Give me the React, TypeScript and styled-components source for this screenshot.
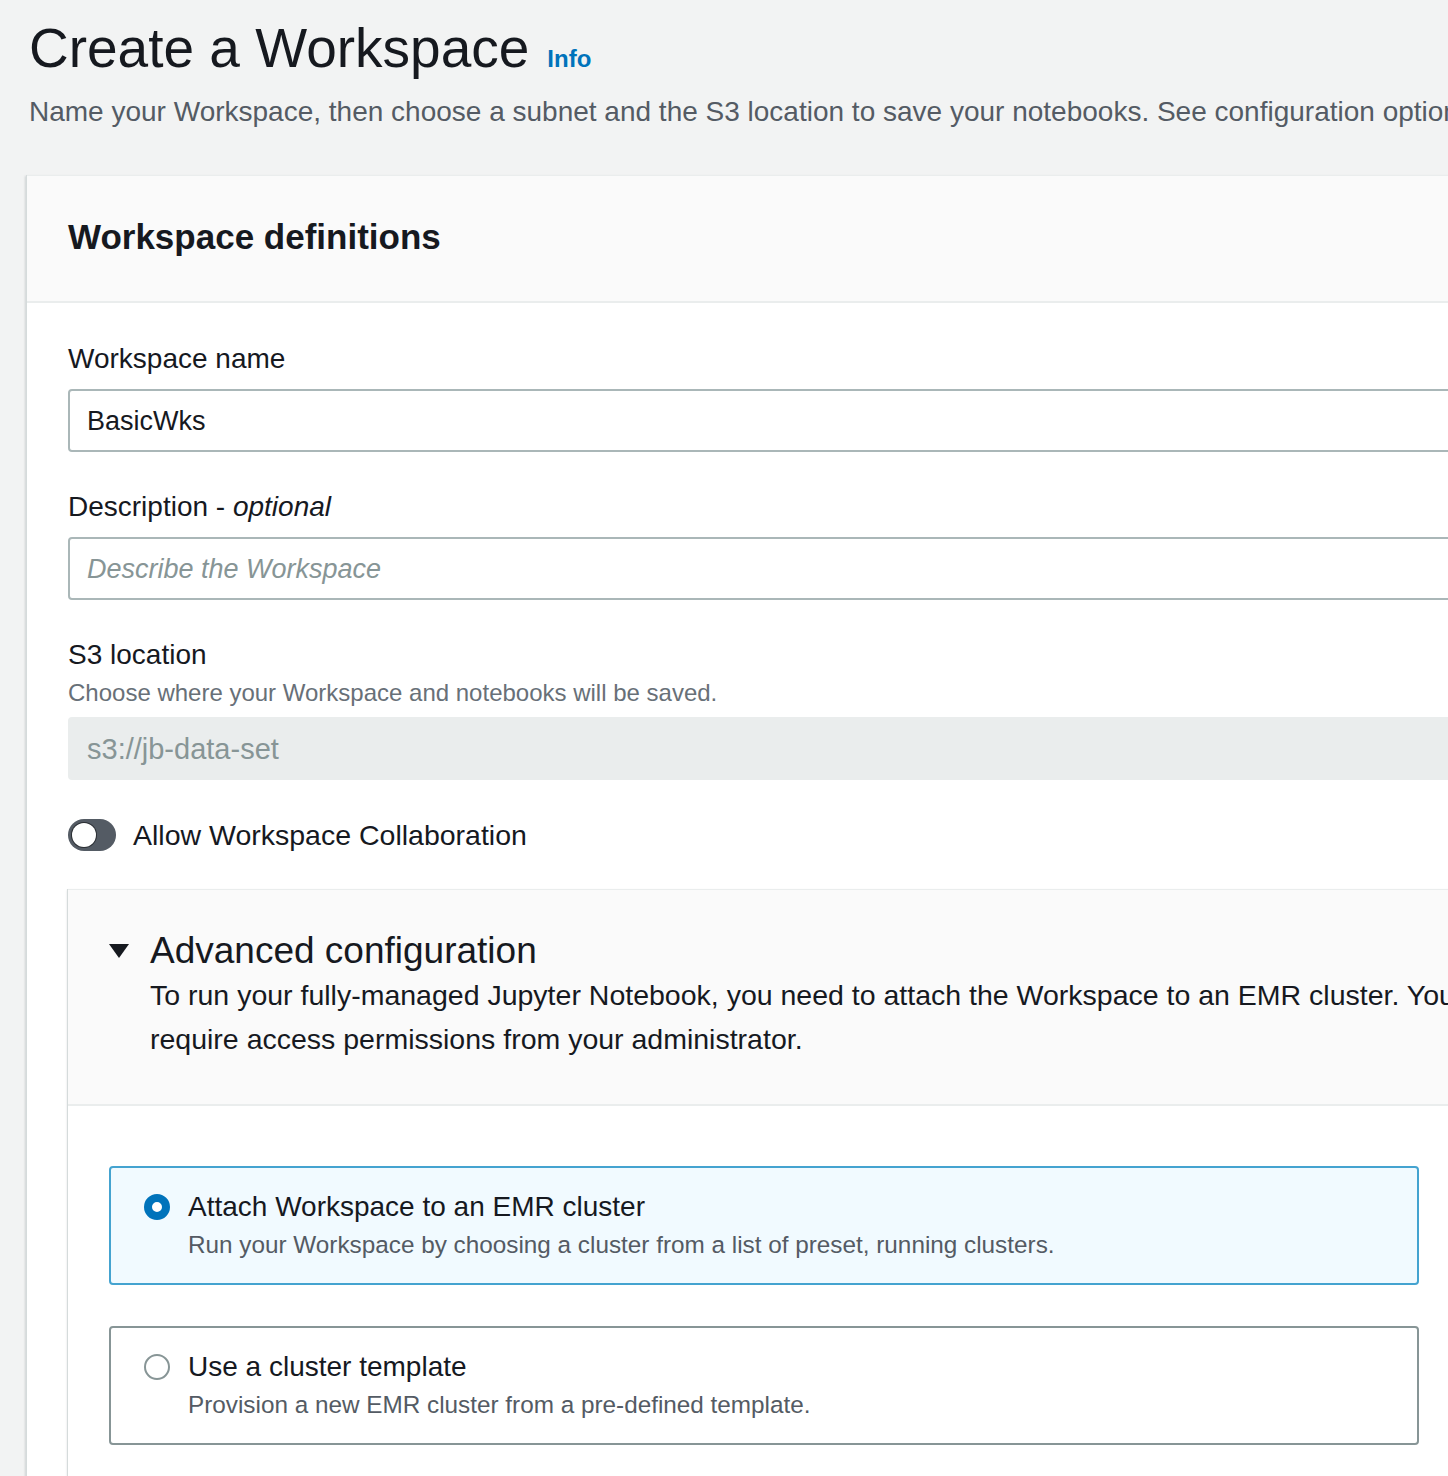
import React from "react";
import styled, { createGlobalStyle } from "styled-components";

const Global = createGlobalStyle`
  html, body {
    margin: 0;
    padding: 0;
    background: #f2f3f3;
    overflow-x: hidden;
  }
  body {
    font-family: "Liberation Sans", Arial, sans-serif;
    color: #16191f;
  }
  * { box-sizing: border-box; }
`;

const Page = styled.div`
  width: 1600px;
  padding: 16px 0 0 29px;
`;

const TitleRow = styled.div`
  display: flex;
  align-items: baseline;
  gap: 18px;
`;

const Title = styled.h1`
  margin: 0;
  font-size: 55px;
  line-height: 64px;
  font-weight: 400;
  color: #16191f;
`;

const InfoLink = styled.a`
  font-size: 24px;
  font-weight: 700;
  color: #0073bb;
  text-decoration: none;
`;

const Subtitle = styled.p`
  margin: 12px 0 0;
  font-size: 28px;
  line-height: 40px;
  color: #545b64;
  white-space: nowrap;
`;

const Card = styled.section`
  margin: 43px 0 0 -2px;
  background: #fff;
  border-top: 1px solid #eaeded;
  box-shadow: -1px 0 0 #d5dbdb, -2px 1px 2px rgba(0, 28, 36, 0.15);
`;

const CardHeader = styled.header`
  background: #fafafa;
  padding: 39px 41px 42px;
  border-bottom: 2px solid #eaeded;
`;

const CardTitle = styled.h2`
  margin: 0;
  font-size: 35px;
  line-height: 44px;
  font-weight: 700;
`;

const CardBody = styled.div`
  padding: 36px 0 80px 41px;
  display: flex;
  flex-direction: column;
`;

const Field = styled.div<{ $gap?: number }>`
  display: flex;
  flex-direction: column;
  margin-top: ${(p) => p.$gap ?? 0}px;
`;

const Label = styled.label`
  font-size: 28px;
  line-height: 40px;
  color: #16191f;
  em { font-style: italic; }
`;

const Hint = styled.div`
  font-size: 24px;
  line-height: 36px;
  color: #687078;
`;

const Input = styled.div<{ $variant?: "value" | "placeholder" | "disabled"; $top?: number }>`
  margin-top: ${(p) => p.$top ?? 10}px;
  height: 63px;
  display: flex;
  align-items: center;
  padding: 2px 17px 0;
  border-radius: 4px;
  font-size: ${(p) => (p.$variant === "disabled" ? 29 : 27)}px;
  border: 2px solid ${(p) => (p.$variant === "disabled" ? "#eaeded" : "#aab7b8")};
  background: ${(p) => (p.$variant === "disabled" ? "#eaeded" : "#fff")};
  color: ${(p) => (p.$variant === "value" ? "#16191f" : "#879596")};
  font-style: ${(p) => (p.$variant === "placeholder" ? "italic" : "normal")};
`;

const ToggleRow = styled.div`
  margin-top: 35px;
  display: flex;
  align-items: center;
  gap: 17px;
  height: 40px;
`;

const Track = styled.span`
  position: relative;
  width: 48px;
  height: 32px;
  border-radius: 16px;
  background: #545b64;
  flex: none;
`;

const Knob = styled.span`
  position: absolute;
  left: 4px;
  top: 4px;
  width: 24px;
  height: 24px;
  border-radius: 50%;
  background: #fff;
  box-shadow: 0 0 0 1px #2a2e33;
`;

const ToggleLabel = styled.span`
  font-size: 28.5px;
  line-height: 40px;
`;

const Expand = styled.div`
  margin-top: 34px;
  background: #fff;
  border-top: 1px solid #eaeded;
  box-shadow: -1px 0 0 #d5dbdb, -1px 1px 2px rgba(0, 28, 36, 0.12);
`;

const ExpandHeader = styled.div`
  background: #fafafa;
  padding: 39px 0 43px 41px;
  border-bottom: 2px solid #eaeded;
  display: flex;
  gap: 21px;
`;

const Caret = styled.svg`
  flex: none;
  margin-top: 14px;
`;

const ExpandText = styled.div`
  display: flex;
  flex-direction: column;
`;

const ExpandTitle = styled.h3`
  margin: 0;
  font-size: 37px;
  line-height: 44px;
  font-weight: 400;
`;

const ExpandDesc = styled.div`
  font-size: 28.5px;
  line-height: 44px;
  white-space: nowrap;
`;

const ExpandBody = styled.div`
  padding: 60px 0 60px 41px;
  display: flex;
  flex-direction: column;
  gap: 41px;
`;

const Tile = styled.div<{ $selected?: boolean }>`
  width: 1310px;
  border-radius: 4px;
  border: 2px solid ${(p) => (p.$selected ? "#44a3d0" : "#879596")};
  background: ${(p) => (p.$selected ? "#f1faff" : "#fff")};
  padding: 19px 20px 20px 33px;
  display: flex;
  gap: 18px;
`;

const Radio = styled.span<{ $checked?: boolean }>`
  flex: none;
  margin-top: 7px;
  width: 26px;
  height: 26px;
  border-radius: 50%;
  box-sizing: border-box;
  border: ${(p) => (p.$checked ? "8px solid #0073bb" : "2px solid #879596")};
  background: #fff;
`;

const TileText = styled.div`
  display: flex;
  flex-direction: column;
`;

const TileTitle = styled.div`
  font-size: 28px;
  line-height: 40px;
  color: #16191f;
`;

const TileDesc = styled.div`
  font-size: 24.3px;
  line-height: 36px;
  color: #545b64;
`;

export default function App() {
  return (
    <>
      <Global />
      <Page>
        <TitleRow>
          <Title>Create a Workspace</Title>
          <InfoLink href="#">Info</InfoLink>
        </TitleRow>
        <Subtitle>
          Name your Workspace, then choose a subnet and the S3 location to save your notebooks. See configuration options
        </Subtitle>
        <Card>
          <CardHeader>
            <CardTitle>Workspace definitions</CardTitle>
          </CardHeader>
          <CardBody>
            <Field>
              <Label>Workspace name</Label>
              <Input $variant="value">BasicWks</Input>
            </Field>
            <Field $gap={35}>
              <Label>
                Description - <em>optional</em>
              </Label>
              <Input $variant="placeholder">Describe the Workspace</Input>
            </Field>
            <Field $gap={35}>
              <Label>S3 location</Label>
              <Hint>Choose where your Workspace and notebooks will be saved.</Hint>
              <Input $variant="disabled" $top={6}>s3://jb-data-set</Input>
            </Field>
            <ToggleRow>
              <Track>
                <Knob />
              </Track>
              <ToggleLabel>Allow Workspace Collaboration</ToggleLabel>
            </ToggleRow>
            <Expand>
              <ExpandHeader>
                <Caret width="20" height="16" viewBox="0 0 20 16">
                  <polygon points="0,1 20,1 10,15" fill="#16191f" />
                </Caret>
                <ExpandText>
                  <ExpandTitle>Advanced configuration</ExpandTitle>
                  <ExpandDesc>
                    To run your fully-managed Jupyter Notebook, you need to attach the Workspace to an EMR cluster. You
                  </ExpandDesc>
                  <ExpandDesc>require access permissions from your administrator.</ExpandDesc>
                </ExpandText>
              </ExpandHeader>
              <ExpandBody>
                <Tile $selected>
                  <Radio $checked />
                  <TileText>
                    <TileTitle>Attach Workspace to an EMR cluster</TileTitle>
                    <TileDesc>Run your Workspace by choosing a cluster from a list of preset, running clusters.</TileDesc>
                  </TileText>
                </Tile>
                <Tile>
                  <Radio />
                  <TileText>
                    <TileTitle>Use a cluster template</TileTitle>
                    <TileDesc>Provision a new EMR cluster from a pre-defined template.</TileDesc>
                  </TileText>
                </Tile>
              </ExpandBody>
            </Expand>
          </CardBody>
        </Card>
      </Page>
    </>
  );
}
